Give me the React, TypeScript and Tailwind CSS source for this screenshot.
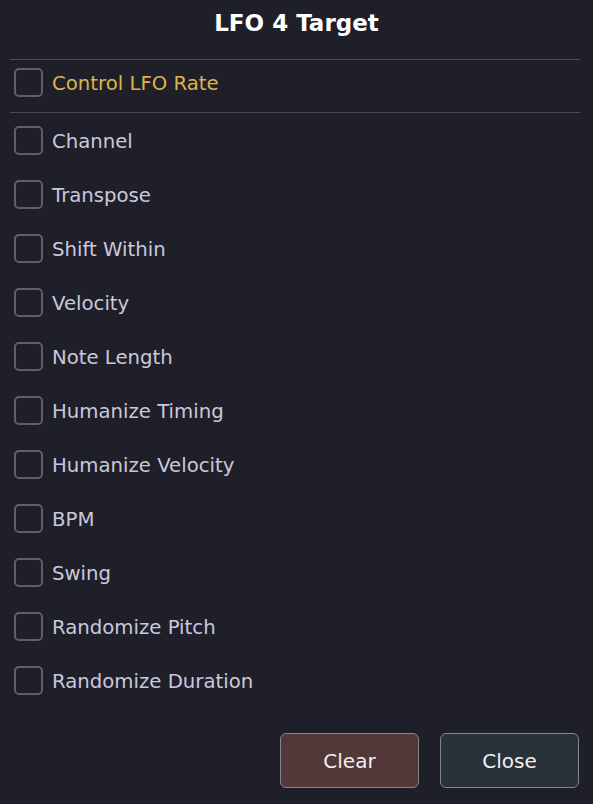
import React, { useState } from 'react';

const targets = [
  'Channel',
  'Transpose',
  'Shift Within',
  'Velocity',
  'Note Length',
  'Humanize Timing',
  'Humanize Velocity',
  'BPM',
  'Swing',
  'Randomize Pitch',
  'Randomize Duration',
];

const Box: React.FC<{ checked: boolean }> = ({ checked }) => (
  <span
    className={`flex items-center justify-center w-[29px] h-[29px] shrink-0 rounded-[5px] border-2 border-[#5f5f6a] ${
      checked ? 'bg-[#3a3a48]' : ''
    }`}
  >
    {checked && <span className="w-[13px] h-[13px] rounded-[2px] bg-[#c8c8da]" />}
  </span>
);

const App: React.FC = () => {
  const [checked, setChecked] = useState<Record<string, boolean>>({});
  const toggle = (k: string) => setChecked((c) => ({ ...c, [k]: !c[k] }));

  return (
    <div className="w-[593px] h-[804px] bg-[#1f1f29] flex flex-col font-['DejaVu_Sans',sans-serif] select-none">
      <div className="h-[59px] pt-[9px] text-center text-[23px] leading-[28px] font-bold text-white">
        LFO 4 Target
      </div>

      <div className="pl-[10px] pr-[13px]">
        <div className="h-px bg-[#4c4b5c]" />
        <button
          onClick={() => toggle('rate')}
          className="flex items-center gap-[9px] h-[52px] pl-[4px] pt-[8px] pb-[15px] text-[19.7px] leading-[28px] text-[#dcb44c]"
        >
          <Box checked={!!checked.rate} />
          <span className="pt-[3px]">Control LFO Rate</span>
        </button>
        <div className="h-px bg-[#4c4b5c]" />

        <div className="flex flex-col gap-[25px] pt-[13px] pl-[4px]">
          {targets.map((t) => (
            <button
              key={t}
              onClick={() => toggle(t)}
              className="flex items-center gap-[9px] h-[29px] text-[19.7px] leading-[28px] text-[#c9c8dc] text-left"
            >
              <Box checked={!!checked[t]} />
              <span className="pt-[3px]">{t}</span>
            </button>
          ))}
        </div>
      </div>

      <div className="flex justify-end gap-[21px] pr-[14px] mt-[38px]">
        <button className="w-[139px] h-[55px] rounded-[6px] border border-[#85858c] bg-[#523838] text-[20px] text-[#f2f0f2]">
          Clear
        </button>
        <button className="w-[139px] h-[55px] rounded-[6px] border border-[#85858c] bg-[#283238] text-[20px] text-[#f2f0f2]">
          Close
        </button>
      </div>
    </div>
  );
};

export default App;
